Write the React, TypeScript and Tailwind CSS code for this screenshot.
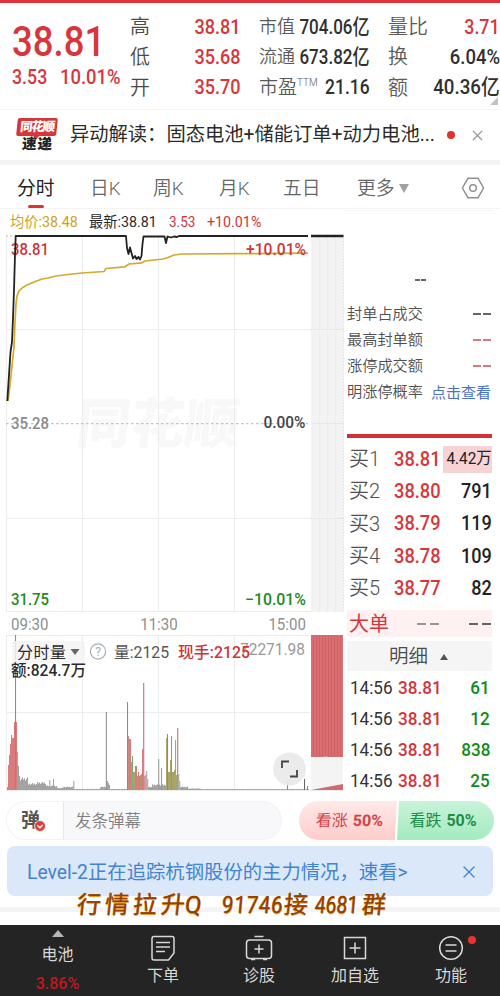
import { X } from 'lucide-react';
import type { ReactNode } from 'react';

type Bar = [x: number, height: number, color: string];

const RED = '#d97b7d';
const GREEN = '#6fb36f';
const OLIVE = '#a8a468';
const GREY = '#a3a3a3';

const tabs = [
  { label: '分时', width: 'w-[73px]', active: true },
  { label: '日K', width: 'w-[63px]' },
  { label: '周K', width: 'w-[66px]' },
  { label: '月K', width: 'w-[64px]' },
  { label: '五日', width: 'w-[74px]' },
];

const limitStats = [
  { label: '封单占成交', color: 'text-[#333]' },
  { label: '最高封单额', color: 'text-[#c8505a]' },
  { label: '涨停成交额', color: 'text-[#c8505a]' },
];

const bids = [
  { label: '买1', price: '38.81', volume: '4.42万' },
  { label: '买2', price: '38.80', volume: '791' },
  { label: '买3', price: '38.79', volume: '119' },
  { label: '买4', price: '38.78', volume: '109' },
  { label: '买5', price: '38.77', volume: '82' },
];

const trades = ['61', '12', '838', '25'];

const openingBars: Bar[] = [
  [7, 3, RED], [8, 25, RED], [9, 35, RED], [10, 46, RED], [11, 55, RED], [12, 52, RED], [13, 52, RED],
  [14, 68, RED], [15, 155, '#a87f80'], [16, 68, RED], [17, 38, GREY], [18, 24, GREY], [19, 14, GREY],
];

const sessionBars: Bar[] = [
  [49.3, 10, GREY], [53, 11, GREY], [73.3, 9, GREY], [105.8, 78, '#8c8c8c'], [107, 9, GREY], [108, 7, GREY], [109, 5, GREY],
  [127, 88, '#55b055'], [128, 54, '#c98a80'], [129, 51, RED], [130, 51, RED], [131, 28, OLIVE], [132, 34, GREEN],
  [133, 18, OLIVE], [134, 18, OLIVE], [135, 24, RED], [136, 24, RED], [137, 14, OLIVE], [138, 18, RED], [139, 14, RED],
  [140, 15, OLIVE], [141, 16, RED], [142, 41, RED], [143.2, 107, '#c4686d'], [144.2, 14, RED], [145.2, 15, GREY], [146.2, 19, GREY],
  [147.2, 11, GREY], [158.2, 31, '#999'], [161, 22, '#999'], [166, 52, OLIVE], [167, 56, '#7d9a62'], [168, 18, OLIVE],
  [169, 18, OLIVE], [170, 30, OLIVE], [171, 54, '#7fa36c'], [172, 18, OLIVE], [173, 18, OLIVE], [174, 20, OLIVE],
  [175, 50, '#6fc06f'], [176, 15, OLIVE], [177.2, 62, '#c4686d'], [178.2, 16, GREY], [179.2, 9, GREY],
  [287, 9, '#888'], [304, 11, '#666'], [307, 4, '#888'],
];

// low-volume minutes: [first x, last x, level]
const quietRuns = [
  [20, 27, 11], [28, 36, 6], [37, 45, 7], [46, 56, 4], [57, 62, 2], [63, 72, 3], [73, 99, 1],
  [100, 109, 3], [110, 126, 1], [148, 151, 3], [152, 165, 5], [180, 187, 3], [188, 200, 1.4], [201, 308, 0.9],
];

const quietBars: Bar[] = quietRuns.flatMap(([from, to, level]) =>
  Array.from({ length: to - from + 1 }, (_, i): Bar => {
    const x = from + i;
    return [x, Math.max(0.8, level * (0.85 + 0.15 * ((x * 7) % 5) / 2)), GREY];
  }),
);

const Num = ({ className = '', children }: { className?: string; children: ReactNode }) => (
  <span className={`inline-block whitespace-nowrap ${className}`}>{children}</span>
);

const QuoteHeader = () => (
  <header className="flex h-[106px] pt-[9px] leading-none text-[#303030]">
    <div className="w-[130px] pl-3 text-[#d6363c]">
      <div className="h-[54px] pt-2">
        <Num className="origin-left scale-x-[.87] text-[42px] leading-[44px] font-medium">38.81</Num>
      </div>
      <div className="flex h-[22px] items-center gap-3 text-[20px] font-medium">
        <Num className="w-9 origin-left scale-x-[.89]">3.53</Num>
        <Num className="origin-left scale-x-[.92]">10.01%</Num>
      </div>
    </div>
    <div className="flex w-[111px] flex-col">
      {[['高', '38.81'], ['低', '35.68'], ['开', '35.70']].map(([label, value]) => (
        <div key={label} className="flex h-[30.3px] items-center justify-between">
          <span className="text-[20px] font-[350] text-[#4a4a4a]">{label}</span>
          <Num className="origin-right scale-x-[.86] text-[21px] font-medium text-[#d6363c]">{value}</Num>
        </div>
      ))}
    </div>
    <div className="flex w-[129px] flex-col pl-[18px]">
      <div className="flex h-[30.3px] items-center justify-between">
        <span className="text-[18px] font-[350] text-[#5a5a5a]">市值</span>
        <Num className="-ml-5 origin-right scale-x-[.81] text-[21px] font-medium">704.06亿</Num>
      </div>
      <div className="flex h-[30.3px] items-center justify-between">
        <span className="text-[18px] font-[350] text-[#5a5a5a]">流通</span>
        <Num className="-ml-5 origin-right scale-x-[.81] text-[21px] font-medium">673.82亿</Num>
      </div>
      <div className="flex h-[30.3px] items-center justify-between">
        <span className="flex text-[19px] font-[350] text-[#5a5a5a]">
          市盈<span className="text-[10px]">TTM</span>
        </span>
        <Num className="-ml-5 origin-right scale-x-[.83] text-[21px] font-medium">21.16</Num>
      </div>
    </div>
    <div className="relative flex w-[130px] flex-col pl-[18px]">
      <div className="flex h-[30.3px] items-center justify-between">
        <span className="text-[20px] font-[350] text-[#5a5a5a]">量比</span>
        <Num className="origin-right scale-x-[.85] text-[21px] font-medium text-[#d6363c]">3.71</Num>
      </div>
      <div className="flex h-[30.3px] items-center justify-between">
        <span className="text-[20px] font-[350] text-[#5a5a5a]">换</span>
        <Num className="origin-right scale-x-[.88] text-[21px] font-medium">6.04%</Num>
      </div>
      <div className="flex h-[30.3px] items-center justify-between">
        <span className="text-[20px] font-[350] text-[#5a5a5a]">额</span>
        <Num className="origin-right scale-x-[.89] text-[21px] font-medium">40.36亿</Num>
      </div>
      <svg className="absolute right-0.5 bottom-1 h-2 w-2" viewBox="0 0 8 8">
        <path d="M8 0V8H0Z" fill="#c4c4c4" />
      </svg>
    </div>
  </header>
);

const NewsStrip = () => (
  <div className="flex h-[51px] items-center border-t border-[#f3f3f3] pl-[17px]">
    <div className="flex w-[53px] flex-col items-start pt-px leading-none">
      <div className="relative flex h-[18px] w-[40px] -skew-x-6 items-center justify-center rounded-[2px] bg-[#d8353a] text-[12.5px] font-black tracking-[-1.2px] text-white">
        同花顺
        <span className="absolute -bottom-1 left-[17px] h-0 w-0 border-x-[3px] border-t-4 border-x-transparent border-t-[#d8353a]" />
      </div>
      <div className="mt-[2px] ml-[5px] -skew-x-3 text-[14.5px] font-black tracking-[1px] text-[#222]">速递</div>
    </div>
    <div className="w-[366px] pt-px text-[19.3px] whitespace-nowrap text-[#2b2b2b]">异动解读：固态电池+储能订单+动力电池...</div>
    <span className="ml-[11px] h-2 w-2 rounded-full bg-[#e0322f]" />
    <X className="ml-[14px] text-[#999]" size={17} strokeWidth={1.7} />
  </div>
);

const ChartTabs = () => (
  <nav className="flex h-[44px] items-center border-b border-[#f4f4f4] pt-[2px] pl-[17px] text-[18.8px] text-[#666]">
    {tabs.map((tab) => (
      <div key={tab.label} className={`relative flex h-full items-center pt-[3px] font-[350] ${tab.width} ${tab.active ? 'font-normal! text-[#222]' : ''}`}>
        {tab.label}
        {tab.active && <span className="absolute bottom-0 left-[11px] h-[3px] w-4 rounded-full bg-[#d8353a]" />}
      </div>
    ))}
    <div className="flex w-[104px] items-center gap-[3px] pt-[3px] font-[350]">
      更多
      <svg width="12" height="10" viewBox="0 0 12 10">
        <path d="M1 0H11L6 9Z" fill="#a0a0a0" />
      </svg>
    </div>
    <svg width="24" height="22" viewBox="0 0 24 22" fill="none" stroke="#8f8f8f" strokeWidth="1.5" strokeLinejoin="round">
      <path d="M7 1.2H17L22.6 11L17 20.8H7L1.4 11Z" />
      <circle cx="12" cy="11" r="3.3" />
    </svg>
  </nav>
);

const PriceChart = () => (
  <svg className="block" width="345" height="379" viewBox="0 233 345 379">
    <g transform="translate(75 443) skewX(-6)">
      <text fontSize="54" fontWeight="900" fill="#f8f8f8" textLength="162">同花顺</text>
    </g>
    <g stroke="#ececec" strokeWidth="1">
      <path d="M6.5 235V612M82.5 235V612M158.5 235V612M234.5 235V612M6 329.5H344M6 518.5H344M6 611.5H344" />
    </g>
    <rect x="311" y="235" width="33" height="377" fill="#f3f3f3" />
    <path d="M319.5 235V612M327.5 235V612M335.5 235V612" stroke="#ededed" />
    <path d="M311 329.5H344M311 423.5H344M311 518.5H344" stroke="#e6e6e6" />
    <path d="M343.5 235V612" stroke="#e2e2e2" strokeDasharray="1 2" />
    <path d="M6 423.7H308" stroke="#b5b5b5" strokeDasharray="2.5 2.5" />
    <path d="M6 236H14" stroke="#bbb" strokeDasharray="2 2" />
    <g fontSize="16" fontWeight="500">
      <text x="11" y="255" fill="#cf3438" textLength="38" lengthAdjust="spacingAndGlyphs">38.81</text>
      <text x="11" y="428.500" fill="#8a8a8a" textLength="38" lengthAdjust="spacingAndGlyphs">35.28</text>
      <text x="263.500" y="428" fill="#444" textLength="42" lengthAdjust="spacingAndGlyphs">0.00%</text>
      <text x="11" y="604.500" fill="#1d8a22" textLength="38" lengthAdjust="spacingAndGlyphs">31.75</text>
      <text x="245" y="604.500" fill="#1d8a22" textLength="61" lengthAdjust="spacingAndGlyphs">−10.01%</text>
    </g>
    <path
      d="M8 401L10 385L12 366L14 347L15 322L16 304L17 296L19 291L22 288L27 285L34 282L42 279L48 278L56 276L68 274.500L82 273L104 271.500L106 268.500L125 266.800L129 264L142 262.800L145 261L163 259L168 257.500L174 255L182 254L240 253.700L308 253.200"
      fill="none"
      stroke="#d6a92c"
      strokeWidth="1.7"
      strokeLinejoin="round"
    />
    <path
      d="M7.300 401L9 375L10.500 352L12 342L13 318L14 290L15 255L15.700 236H126L127 248L128.500 254L130 247.500L131.500 253L133 258.500L135 256L136.500 259L138.500 257L140 259.500L141.500 256L142.500 244L143.500 236.500H164.500L166 243L167.500 236.500L171 237.500L174 236.500L177 237L179 236H308"
      fill="none"
      stroke="#222"
      strokeWidth="1.8"
      strokeLinejoin="round"
    />
    <path d="M311 236H343.500" stroke="#222" strokeWidth="2.600" />
    <text x="246" y="255" fontSize="16" fontWeight="500" fill="#cf3438" textLength="60" lengthAdjust="spacingAndGlyphs">+10.01%</text>
  </svg>
);

const VolumeChart = () => (
  <svg className="block" width="345" height="156" viewBox="0 635 345 156">
    <path d="M6.5 635V790M82.5 635V790M158.5 635V790M234.5 635V790M6 635.5H308M6 712.5H310M6 790.5H344" stroke="#ececec" fill="none" />
    {[...openingBars, ...quietBars, ...sessionBars].map(([x, h, color], i) => (
      <rect key={i} x={x} y={790 - h} width="1.05" height={h} fill={color} />
    ))}
    <rect x="311" y="635" width="32" height="122" fill="#dc6d70" />
    <path
      d="M313.500 635V757M316.500 635V757M319.500 635V757M322.500 635V757M325.500 635V757M328.500 635V757M331.500 635V757M334.500 635V757M337.500 635V757M340.500 635V757"
      stroke="#ca6265"
      strokeWidth="1"
    />
    <path d="M311 758L327 756.500V758H343V784L327 787L311 790Z" fill="#f4f4f4" />
    <path d="M311 790L327 787L343 784V790Z" fill="#cf6a6d" />
    <rect x="12" y="641" width="73" height="22" rx="3" fill="#f3f3f3" fillOpacity=".85" />
    <text x="17" y="658" fontSize="16" fill="#2b2b2b" textLength="49">分时量</text>
    <path d="M70.500 649H79.500L75 655Z" fill="#666" />
    <circle cx="98" cy="651.500" r="7.600" fill="none" stroke="#a3b0b0" strokeWidth="1.200" />
    <text x="98" y="655.800" fontSize="12" fill="#a3b0b0" textAnchor="middle">?</text>
    <text x="114" y="658" fontSize="16" fill="#555" textLength="55" lengthAdjust="spacingAndGlyphs">量:2125</text>
    <text x="305" y="655" fontSize="16" fill="#999" textAnchor="end" textLength="65" lengthAdjust="spacingAndGlyphs">72271.98</text>
    <text x="178" y="658" fontSize="16" fontWeight="500" fill="#cf3438" textLength="72" lengthAdjust="spacingAndGlyphs">现手:2125</text>
    <text x="11" y="676" fontSize="16" fontWeight="500" fill="#2b2b2b" textLength="75" lengthAdjust="spacingAndGlyphs">额:824.7万</text>
    <circle cx="289.500" cy="769" r="16.500" fill="#e9e9e9" fillOpacity=".92" />
    <path d="M282 768V761.500H289M297 770V776.500H290" fill="none" stroke="#444" strokeWidth="1.800" />
  </svg>
);

const ChartColumn = () => (
  <section className="w-[347px]">
    <div className="flex h-[23px] items-center pt-[2px] pl-[10px] text-[15px] leading-none text-[#2b2b2b]">
      <Num className="w-[79px] origin-left scale-x-[.95] text-[#cf9f26]">均价:38.48</Num>
      <Num className="w-[80px] origin-left scale-x-[.95]">最新:38.81</Num>
      <Num className="w-[38px] origin-left scale-x-[.9] text-[#cf3438]">3.53</Num>
      <Num className="origin-left scale-x-[.95] text-[#cf3438]">+10.01%</Num>
    </div>
    <PriceChart />
    <div className="flex h-[23px] items-center justify-between pt-[2px] pr-[41px] pl-[11px] text-[16px] text-[#8f8f8f]">
      <Num className="origin-left scale-x-[.94]">09:30</Num>
      <Num className="scale-x-[.94]">11:30</Num>
      <Num className="origin-right scale-x-[.94]">15:00</Num>
    </div>
    <VolumeChart />
  </section>
);

const Dashes = ({ className = '' }: { className?: string }) => (
  <svg className={className} width="18" height="2" viewBox="0 0 18 2">
    <path d="M0 1H8M10 1H18" stroke="currentColor" strokeWidth="1.5" />
  </svg>
);

const OrderBook = () => (
  <section className="w-[146px] leading-none">
    <div className="ml-[-2px] h-px border-b border-[#f4f4f4]" />
    <div className="flex h-[91px] items-end justify-center pb-[21px] text-[#333]">
      <svg width="11" height="2" viewBox="0 0 11 2">
        <path d="M0 1H5M6 1H11" stroke="currentColor" strokeWidth="1.500" />
      </svg>
    </div>
    {limitStats.map((row) => (
      <div key={row.label} className="flex h-[26px] items-center justify-between pr-0.5 text-[15.2px] font-[350] text-[#505050]">
        {row.label}
        <Dashes className={`-mt-[3px] ${row.color}`} />
      </div>
    ))}
    <div className="flex h-[26px] items-center justify-between pr-0.5 text-[15.200px] font-[350] whitespace-nowrap text-[#505050]">
      明涨停概率
      <span className="text-[15px] font-normal text-[#4a73c8]">点击查看</span>
    </div>
    <div className="mt-[28px] mb-[5px] h-1 w-[145px] bg-[#d23236]" />
    {bids.map((bid, i) => (
      <div key={bid.label} className="flex h-[32.3px] items-center pl-0.5 text-[21px]">
        <span className="w-[45px] text-[20px] font-[350] text-[#505050]">{bid.label}</span>
        <Num className="w-[49px] origin-left scale-x-[.87] font-medium text-[#d6363c]">{bid.price}</Num>
        <span className={`flex h-[27px] w-[49px] items-center justify-end text-[#222] ${i === 0 ? 'bg-[#f8d3d6] text-[16.500px]' : 'font-medium'}`}>
          <Num className={`origin-right ${i === 0 ? 'scale-x-[.93]' : 'scale-x-[.86]'}`}>{bid.volume}</Num>
        </span>
      </div>
    ))}
    <div className="mt-[6px] flex h-[27px] w-[145px] items-center bg-[#fff1f1] pl-0.5">
      <span className="w-[68px] text-[20px] text-[#d6363c]">大单</span>
      <svg width="75" height="2" viewBox="0 0 75 2" strokeWidth="1.600">
        <path d="M0 1H9M13 1H22" stroke="#777" />
        <path d="M52 1H61M65 1H74" stroke="#333" />
      </svg>
    </div>
    <div className="mt-1 flex h-[30px] w-[145px] items-center bg-[#f5f5f5] pt-px pl-[42px] text-[19.500px] font-[350] text-[#4a4a4a]">
      明细
      <svg className="ml-3" width="8" height="6" viewBox="0 0 8 6">
        <path d="M0 6H8L4 0Z" fill="#555" />
      </svg>
    </div>
    <div className="pt-px">
      {trades.map((volume) => (
        <div key={volume} className="flex h-[31px] items-center pl-[3px] text-[19px]">
          <Num className="w-[48px] origin-left scale-x-[.9] text-[#333]">14:56</Num>
          <Num className="w-[46px] origin-left scale-x-[.9] font-medium text-[#d0343a]">38.81</Num>
          <span className="flex w-[46px] justify-end">
            <Num className="origin-right scale-x-[.9] font-medium text-[#128a1c]">{volume}</Num>
          </span>
        </div>
      ))}
    </div>
  </section>
);

const DanmuBar = () => (
  <div className="flex h-[39px] items-center pl-[6px]">
    <div className="flex h-full w-[276px] items-center rounded-full border border-[#f3f3f5] bg-[#f8f8fa]">
      <div className="relative flex h-full w-[57px] items-center rounded-l-full border-r border-[#e8e8ea] bg-white pl-[14px] text-[19px] leading-none font-bold text-[#555]">
        弹
        <svg className="absolute top-[18px] left-[27px]" width="12" height="12" viewBox="0 0 12 12">
          <circle cx="6" cy="6" r="5.500" fill="#dc4040" stroke="#fff" strokeWidth=".8" />
          <path d="M3.400 5.500L6 7.800L8.700 5" fill="none" stroke="#fff" strokeWidth="1.300" />
        </svg>
      </div>
      <span className="pt-[3px] pl-[11px] text-[16.500px] font-[350] text-[#808080]">发条弹幕</span>
    </div>
    <div className="ml-[17px] flex h-full w-[195px] overflow-hidden rounded-full text-[16px] font-medium">
      <div className="z-10 -mr-[2px] flex w-[99px] -skew-x-3 items-center justify-center gap-[5px] border-r-2 border-white bg-linear-to-b from-[#fdeae9] to-[#ffccca] pt-px pl-1 text-[#d04345]">
        <span className="font-normal">看涨</span><b>50%</b>
      </div>
      <div className="flex flex-1 items-center justify-center gap-[5px] bg-linear-to-b from-[#c9f2da] to-[#a2ebbf] pt-px pr-1 text-[#1c8e49]">
        <span className="font-normal">看跌</span><b>50%</b>
      </div>
    </div>
  </div>
);

const LevelBanner = () => (
  <div className="mx-[7px] mt-[6px] flex h-[50px] items-center justify-between rounded-lg bg-[#dbe8fa] pt-0.5 pr-[14px] pl-5 text-[#4284cf]">
    <span className="pt-px text-[19.350px] whitespace-nowrap">Level-2正在追踪杭钢股份的主力情况，速看&gt;</span>
    <X size={20} strokeWidth={1.500} />
  </div>
);

const Signature = () => (
  <div className="absolute top-[-7px] left-[77px] flex h-[32px] w-[320px] items-center text-[24px] leading-none whitespace-nowrap text-[#8f3f08] [text-shadow:0.5px_0.5px_0_#e8982e,-0.5px_0_0_#c77820]">
    <span className="w-[145px] -skew-x-6 tracking-[4px]">行情拉升<span className="-ml-1">Q</span></span>
    <span className="w-[62px] origin-left scale-x-[.85] -skew-x-6 tracking-[1px]">91746</span>
    <span className="w-[31px] -skew-x-6">接</span>
    <span className="w-[47px] origin-left scale-x-[.8] -skew-x-6">4681</span>
    <span className="-skew-x-6">群</span>
  </div>
);

const NavItem = ({ label, children }: { label: string; children: ReactNode }) => (
  <div className="flex w-[96px] flex-col items-center pt-[9px] text-[16px] leading-none text-[#d8d8d8]">
    <svg className="mb-[6px]" width="28" height="28" viewBox="0 0 28 28" fill="none" stroke="currentColor" strokeWidth="1.500">
      {children}
    </svg>
    {label}
  </div>
);

const BottomNav = () => (
  <nav className="flex h-[71px] bg-[#242424]">
    <div className="flex w-[115px] flex-col items-center pt-[5px] text-[16px] leading-none text-[#d8d8d8]">
      <svg width="12" height="7" viewBox="0 0 12 7">
        <path d="M0 7H12L6 0Z" fill="#b8b8b8" />
      </svg>
      <span className="mt-[10px]">电池</span>
      <span className="mt-[13px] text-[16px] font-medium text-[#c4161c]">3.86%</span>
    </div>
    <NavItem label="下单">
      <path d="M5 2.500H23Q25 2.500 25 4.500V19L19.500 26H5Q3 26 3 24V4.500Q3 2.500 5 2.500Z" />
      <path d="M7 8.500H21M7 13H21M7 17.500H16" />
    </NavItem>
    <NavItem label="诊股">
      <path d="M9.500 2.500H18.500M4.500 6H23.500Q26.500 6 26.500 9V21.500Q26.500 24.500 23.500 24.500H4.500Q1.500 24.500 1.500 21.500V9Q1.500 6 4.500 6Z" />
      <path d="M9.500 15H18.500M14 10.500V19.500M6 25.500H10M18 25.500H22" />
    </NavItem>
    <NavItem label="加自选">
      <path d="M3.500 3.500H24.500V24.500H3.500ZM8.500 14H19.500M14 8.500V19.500" />
    </NavItem>
    <div className="relative">
      <NavItem label="功能">
        <circle cx="14" cy="14" r="11.300" />
        <path d="M8.500 11H19.500M8.500 17H19.500" />
      </NavItem>
      <span className="absolute top-[11px] right-[23px] h-2 w-2 rounded-full bg-[#ee2f2f]" />
    </div>
  </nav>
);

export default function App() {
  return (
    <div className="flex h-[996px] w-[500px] flex-col overflow-hidden border-t-[3px] border-[#e03038] bg-white font-['Roboto','Noto_Sans_CJK_SC',sans-serif]">
      <QuoteHeader />
      <NewsStrip />
      <div className="h-[5px] bg-[#f3f3f3]" />
      <ChartTabs />
      <div className="flex h-[592px] pt-[1px]">
        <ChartColumn />
        <OrderBook />
      </div>
      <DanmuBar />
      <LevelBanner />
      <div className="relative h-[29px] pt-[11px]">
        <div className="h-[5px] bg-[#f4f4f4]" />
        <Signature />
      </div>
      <BottomNav />
    </div>
  );
}
